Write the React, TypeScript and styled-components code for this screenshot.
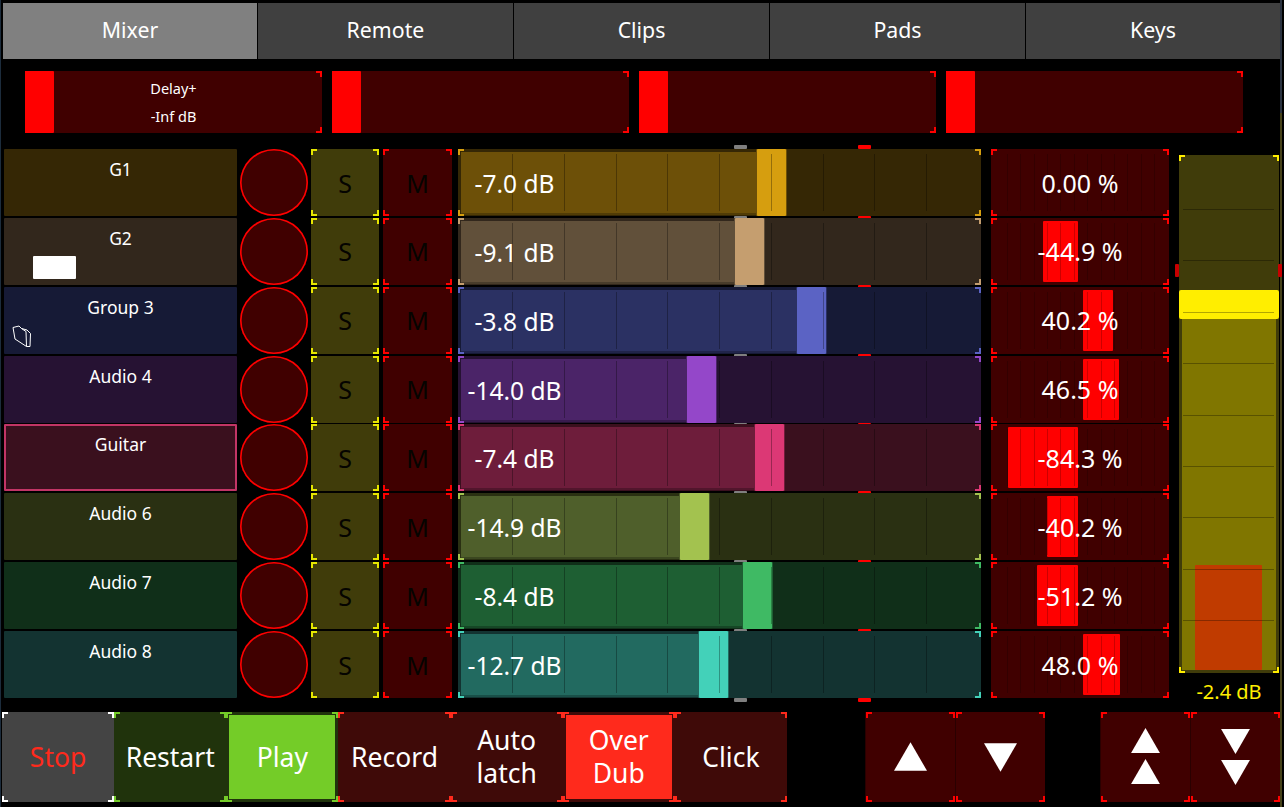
import React from "react";
import styled, { createGlobalStyle, css } from "styled-components";

const GlobalStyle = createGlobalStyle`
  html, body {
    margin: 0;
    background: #000;
    overflow: hidden;
  }
  * {
    box-sizing: border-box;
  }
`;

// the little L-shaped marks every control has in its four corners
const brackets = (color: string, len = 6, weight = 2) => css`
  &::after {
    content: "";
    position: absolute;
    inset: 0;
    pointer-events: none;
    background:
      linear-gradient(${color}, ${color}) 0 0 / ${len}px ${weight}px no-repeat,
      linear-gradient(${color}, ${color}) 0 0 / ${weight}px ${len}px no-repeat,
      linear-gradient(${color}, ${color}) 100% 0 / ${len}px ${weight}px no-repeat,
      linear-gradient(${color}, ${color}) 100% 0 / ${weight}px ${len}px no-repeat,
      linear-gradient(${color}, ${color}) 0 100% / ${len}px ${weight}px no-repeat,
      linear-gradient(${color}, ${color}) 0 100% / ${weight}px ${len}px no-repeat,
      linear-gradient(${color}, ${color}) 100% 100% / ${len}px ${weight}px no-repeat,
      linear-gradient(${color}, ${color}) 100% 100% / ${weight}px ${len}px no-repeat;
  }
`;

const Frame = styled.div`
  width: 1284px;
  height: 807px;
  padding-top: 3px;
  display: flex;
  flex-direction: column;
  font-family: "Noto Sans", "Open Sans", sans-serif;
  color: #fff;
  background:
    linear-gradient(#1c2c3c, #1c2c3c) 0 0 / 1px 100% no-repeat,
    linear-gradient(#2b3340 14%, #46421a 14%) 1280px 0 / 2px 100% no-repeat,
    #000;
`;

const Tabs = styled.div`
  margin: 0 4px 0 3px;
  height: 56px;
  flex: none;
  display: grid;
  grid-template-columns: 254px repeat(3, 255px) 1fr;
  gap: 1px;
`;

const Tab = styled.div<{ $active?: boolean }>`
  display: flex;
  align-items: center;
  justify-content: center;
  font-size: 21.3px;
  padding-bottom: 3px;
  background: ${(p) => (p.$active ? "#808080" : "#404040")};
`;

const Strips = styled.div`
  margin: 12px 0 0 25px;
  height: 62px;
  flex: none;
  display: grid;
  grid-template-columns: repeat(4, 297px);
  column-gap: 10px;
`;

const Strip = styled.div`
  position: relative;
  background: #400000;
  display: flex;
  flex-direction: column;
  align-items: center;
  justify-content: center;
  gap: 8px;
  font-size: 14.5px;
  line-height: 20px;
  ${brackets("#f00")}
`;

const StripThumb = styled.div`
  position: absolute;
  left: 0;
  top: 0;
  bottom: 0;
  width: 29px;
  background: #f00;
  border-radius: 1px;
`;

const Mixer = styled.div`
  margin: 16px 0 0 4px;
  height: 549px;
  flex: none;
  display: flex;
  align-items: flex-start;
`;

const Tracks = styled.div`
  width: 1165px;
  display: flex;
  flex-direction: column;
  gap: 1.86px;
`;

const Track = styled.div`
  height: 67px;
  display: flex;
`;

const Name = styled.div<{ $bg: string; $selected?: string }>`
  position: relative;
  width: 233px;
  padding-top: 7px;
  text-align: center;
  font-size: 17.5px;
  line-height: 26px;
  border-radius: 1px;
  background: ${(p) => p.$bg};
  ${(p) =>
    p.$selected &&
    css`
      border: 2px solid ${p.$selected};
      padding-top: 5px;
    `}
`;

const ColorChip = styled.div`
  position: absolute;
  left: 29px;
  top: 38px;
  width: 43px;
  height: 23px;
  background: #fff;
  border-radius: 1px;
`;

const FolderIcon = styled.svg`
  position: absolute;
  left: 8px;
  top: 38px;
`;

const Meter = styled.div`
  width: 68px;
  height: 67px;
  margin-left: 3px;
  border-radius: 50%;
  background: #400000;
  box-shadow: inset 0 0 0 1.6px #f00;
`;

const Toggle = styled.div<{ $bg: string; $mark: string; $left: number; $w: number }>`
  position: relative;
  width: ${(p) => p.$w}px;
  margin-left: ${(p) => p.$left}px;
  display: flex;
  align-items: center;
  justify-content: center;
  font-size: 25px;
  color: #050400;
  background: ${(p) => p.$bg};
  ${(p) => brackets(p.$mark)}
`;

const Fader = styled.div<{ $bg: string; $mark: string }>`
  position: relative;
  width: 523px;
  margin-left: 6px;
  background: ${(p) => p.$bg};
  ${(p) => brackets(p.$mark)}
`;

const FaderFill = styled.div<{ $fill: string }>`
  position: absolute;
  left: 3px;
  top: 3px;
  bottom: 1px;
  background: ${(p) => p.$fill};
  border-bottom: 2px solid rgba(0, 0, 0, 0.25);
`;

const FaderThumb = styled.div<{ $color: string; $edge: string }>`
  position: absolute;
  top: 0;
  bottom: 0;
  width: 29px;
  background: ${(p) => p.$color};
  box-shadow: 1px 0 0 ${(p) => p.$edge}, -1px 0 0 ${(p) => p.$edge};
  border-radius: 1px;
`;

const FaderTicks = styled.div`
  position: absolute;
  left: 54px;
  width: 415px;
  top: 5px;
  bottom: 5px;
  display: flex;
  justify-content: space-between;
`;

const Tick = styled.i`
  width: 1px;
  background: rgba(0, 0, 0, 0.3);
`;

const FaderText = styled.div`
  position: absolute;
  left: 0;
  top: 0;
  bottom: 0;
  width: 113px;
  display: flex;
  align-items: center;
  justify-content: center;
  font-size: 24.5px;
  white-space: nowrap;
  padding-top: 2px;
`;

const Pip = styled.i<{ $red?: boolean; $top?: boolean }>`
  position: absolute;
  left: ${(p) => (p.$red ? 400 : 276)}px;
  width: 13px;
  height: 4px;
  border-radius: 1px;
  background: ${(p) => (p.$red ? "#f00" : "#7f7f7f")};
  ${(p) => (p.$top ? "top: -4px;" : "bottom: -4px;")}
`;

const Pan = styled.div`
  position: relative;
  width: 178px;
  margin-left: 10px;
  background: #400000;
  ${brackets("#f00")}
`;

const PanBar = styled.div`
  position: absolute;
  top: 3px;
  bottom: 3px;
  background: #f00;
  border-radius: 1px;
`;

const PanTicks = styled.div`
  position: absolute;
  left: 16px;
  width: 148px;
  top: 5px;
  bottom: 5px;
  display: flex;
  justify-content: space-between;
`;

const PanTick = styled.i`
  width: 1px;
  background: rgba(0, 0, 0, 0.2);
`;

const PanText = styled.div`
  position: absolute;
  inset: 0;
  display: flex;
  align-items: center;
  justify-content: center;
  font-size: 25px;
`;

const MasterColumn = styled.div`
  width: 100px;
  margin: 6px 0 0 10px;
  display: flex;
  flex-direction: column;
  align-items: center;
`;

const MasterFader = styled.div`
  position: relative;
  width: 100%;
  height: 518px;
  flex: none;
  background: #403c0a;
  ${brackets("#ffee00")}
`;

const MasterFill = styled.div`
  position: absolute;
  left: 3px;
  right: 3px;
  top: 150px;
  bottom: 3px;
  background: #807600;
`;

const MasterVu = styled.div`
  position: absolute;
  left: 16px;
  right: 17px;
  top: 410px;
  bottom: 3px;
  background: rgba(255, 0, 0, 0.5);
  border-radius: 1px;
`;

const MasterThumb = styled.div`
  position: absolute;
  left: 0;
  right: 0;
  top: 135px;
  height: 29px;
  background: #ffee00;
  border-radius: 2px;
`;

const MasterTicks = styled.div`
  position: absolute;
  left: 4px;
  right: 5px;
  top: 54px;
  height: 412px;
  display: flex;
  flex-direction: column;
  justify-content: space-between;
`;

const MasterTick = styled.i`
  height: 1px;
  background: rgba(0, 0, 0, 0.3);
`;

const MasterPip = styled.i<{ $right?: boolean }>`
  position: absolute;
  top: 109px;
  width: 4px;
  height: 13px;
  background: #c80000;
  border-radius: 1px;
  ${(p) => (p.$right ? "right: -3px;" : "left: -4px;")}
`;

const MasterLabel = styled.div`
  margin-top: 7px;
  font-size: 20px;
  line-height: 24px;
  color: #ffee00;
`;

const Transport = styled.div`
  margin: 14px 0 0 2px;
  height: 90px;
  flex: none;
  display: flex;
`;

const TransportGroup = styled.div`
  width: 785px;
  display: grid;
  grid-template-columns: repeat(7, 1fr);
`;

const ArrowPair = styled.div<{ $left: number }>`
  margin-left: ${(p) => p.$left}px;
  display: flex;
`;

const Button = styled.div<{ $bg: string; $mark: string; $on?: string; $color?: string }>`
  position: relative;
  display: flex;
  align-items: center;
  justify-content: center;
  text-align: center;
  font-size: 26.5px;
  line-height: 33px;
  color: ${(p) => p.$color ?? "#fff"};
  background: ${(p) => p.$on ?? p.$bg};
  ${(p) => p.$on && `box-shadow: inset 0 0 0 3px ${p.$bg};`}
  ${(p) => brackets(p.$mark)}
`;

const ArrowButton = styled.div<{ $up?: boolean }>`
  position: relative;
  width: 90px;
  height: 90px;
  display: flex;
  flex-direction: column;
  align-items: center;
  justify-content: center;
  gap: 6px;
  background: #400000;
  border-left: 1px solid #2a0000;
  padding-bottom: ${(p) => (p.$up ? 2 : 0)}px;
  ${brackets("#f00")}
`;

type Channel = {
  name: string;
  bg: string;
  fill: string;
  thumb: string;
  thumbAt: number;
  db: string;
  pan: string;
  panBar?: [number, number];
};

const channels: Channel[] = [
  { name: "G1", bg: "#352705", fill: "#6d5008", thumb: "#d69e0f", thumbAt: 299, db: "-7.0 dB", pan: "0.00 %" },
  { name: "G2", bg: "#32271c", fill: "#61503a", thumb: "#c59e6f", thumbAt: 277, db: "-9.1 dB", pan: "-44.9 %", panBar: [52, 35] },
  { name: "Group 3", bg: "#161a36", fill: "#2b3163", thumb: "#5b63c4", thumbAt: 339, db: "-3.8 dB", pan: "40.2 %", panBar: [92, 30] },
  { name: "Audio 4", bg: "#261233", fill: "#4b2468", thumb: "#9447c9", thumbAt: 229, db: "-14.0 dB", pan: "46.5 %", panBar: [92, 36] },
  { name: "Guitar", bg: "#3a101e", fill: "#6e1d3b", thumb: "#dc3875", thumbAt: 297, db: "-7.4 dB", pan: "-84.3 %", panBar: [17, 70] },
  { name: "Audio 6", bg: "#2a3012", fill: "#4f5f2b", thumb: "#a3c24f", thumbAt: 222, db: "-14.9 dB", pan: "-40.2 %", panBar: [56, 31] },
  { name: "Audio 7", bg: "#102f19", fill: "#1e5f33", thumb: "#3fba64", thumbAt: 285, db: "-8.4 dB", pan: "-51.2 %", panBar: [46, 41] },
  { name: "Audio 8", bg: "#133331", fill: "#226a60", thumb: "#43d1b9", thumbAt: 241, db: "-12.7 dB", pan: "48.0 %", panBar: [92, 37] },
];

const RED_BG = "#3f0a08";
const RED = "#ff2a1c";
const GREEN_BG = "#20330c";
const GREEN = "#74cc28";

const range = (n: number) => Array.from({ length: n }, (_, i) => i);

const Triangle = ({ size, down }: { size: [number, number]; down?: boolean }) => (
  <svg width={size[0]} height={size[1]} viewBox="0 0 30 26">
    <polygon points={down ? "0,0 30,0 15,26" : "15,0 30,26 0,26"} fill="#fff" />
  </svg>
);

const Folder = () => (
  <FolderIcon width="20" height="23" viewBox="0 0 20 23" fill="none" stroke="#fff" strokeWidth="1" strokeLinejoin="round">
    <path d="M1 2.5 L7 1 L9.5 3.5 L15 5 L18.5 8.5 L18 21.5 L14.5 21.5 L3 14 Z" />
    <path d="M9.5 3.5 L14 6.5 L14.5 21.5" />
  </FolderIcon>
);

export default function App() {
  return (
    <>
      <GlobalStyle />
      <Frame>
        <Tabs>
          <Tab $active>Mixer</Tab>
          <Tab>Remote</Tab>
          <Tab>Clips</Tab>
          <Tab>Pads</Tab>
          <Tab>Keys</Tab>
        </Tabs>

        <Strips>
          <Strip>
            <StripThumb />
            <span>Delay+</span>
            <span>-Inf dB</span>
          </Strip>
          <Strip>
            <StripThumb />
          </Strip>
          <Strip>
            <StripThumb />
          </Strip>
          <Strip>
            <StripThumb />
          </Strip>
        </Strips>

        <Mixer>
          <Tracks>
            {channels.map((ch, i) => (
              <Track key={ch.name}>
                <Name $bg={ch.bg} $selected={ch.name === "Guitar" ? "#c23566" : undefined}>
                  {ch.name}
                  {ch.name === "G2" && <ColorChip />}
                  {ch.name === "Group 3" && <Folder />}
                </Name>
                <Meter />
                <Toggle $bg="#403c0a" $mark="#e6e600" $left={3} $w={68}>S</Toggle>
                <Toggle $bg="#400000" $mark="#f00" $left={4} $w={69}>M</Toggle>
                <Fader $bg={ch.bg} $mark={ch.thumb}>
                  {i === 0 && <Pip $top />}
                  {i === 0 && <Pip $top $red />}
                  <Pip />
                  <Pip $red />
                  <FaderFill $fill={ch.fill} style={{ width: ch.thumbAt - 3 }} />
                  <FaderThumb $color={ch.thumb} $edge={ch.fill} style={{ left: ch.thumbAt }} />
                  <FaderTicks>
                    {range(9).map((t) => (
                      <Tick key={t} />
                    ))}
                  </FaderTicks>
                  <FaderText>{ch.db}</FaderText>
                </Fader>
                <Pan>
                  {ch.panBar && <PanBar style={{ left: ch.panBar[0], width: ch.panBar[1] }} />}
                  <PanTicks>
                    {range(12).map((t) => (
                      <PanTick key={t} />
                    ))}
                  </PanTicks>
                  <PanText>{ch.pan}</PanText>
                </Pan>
              </Track>
            ))}
          </Tracks>

          <MasterColumn>
            <MasterFader>
              <MasterFill />
              <MasterVu />
              <MasterThumb />
              <MasterTicks>
                {range(9).map((t) => (
                  <MasterTick key={t} />
                ))}
              </MasterTicks>
              <MasterPip />
              <MasterPip $right />
            </MasterFader>
            <MasterLabel>-2.4 dB</MasterLabel>
          </MasterColumn>
        </Mixer>

        <Transport>
          <TransportGroup>
            <Button $bg="#444444" $mark="#fff" $color={RED}>Stop</Button>
            <Button $bg={GREEN_BG} $mark={GREEN}>Restart</Button>
            <Button $bg={GREEN_BG} $mark={GREEN} $on={GREEN}>Play</Button>
            <Button $bg={RED_BG} $mark={RED}>Record</Button>
            <Button $bg={RED_BG} $mark={RED}>Auto<br />latch</Button>
            <Button $bg={RED_BG} $mark={RED} $on={RED}>Over<br />Dub</Button>
            <Button $bg={RED_BG} $mark={RED}>Click</Button>
          </TransportGroup>
          <ArrowPair $left={78}>
            <ArrowButton $up>
              <Triangle size={[33, 29]} />
            </ArrowButton>
            <ArrowButton>
              <Triangle size={[33, 29]} down />
            </ArrowButton>
          </ArrowPair>
          <ArrowPair $left={55}>
            <ArrowButton $up>
              <Triangle size={[29, 25]} />
              <Triangle size={[29, 25]} />
            </ArrowButton>
            <ArrowButton>
              <Triangle size={[29, 25]} down />
              <Triangle size={[29, 25]} down />
            </ArrowButton>
          </ArrowPair>
        </Transport>
      </Frame>
    </>
  );
}
